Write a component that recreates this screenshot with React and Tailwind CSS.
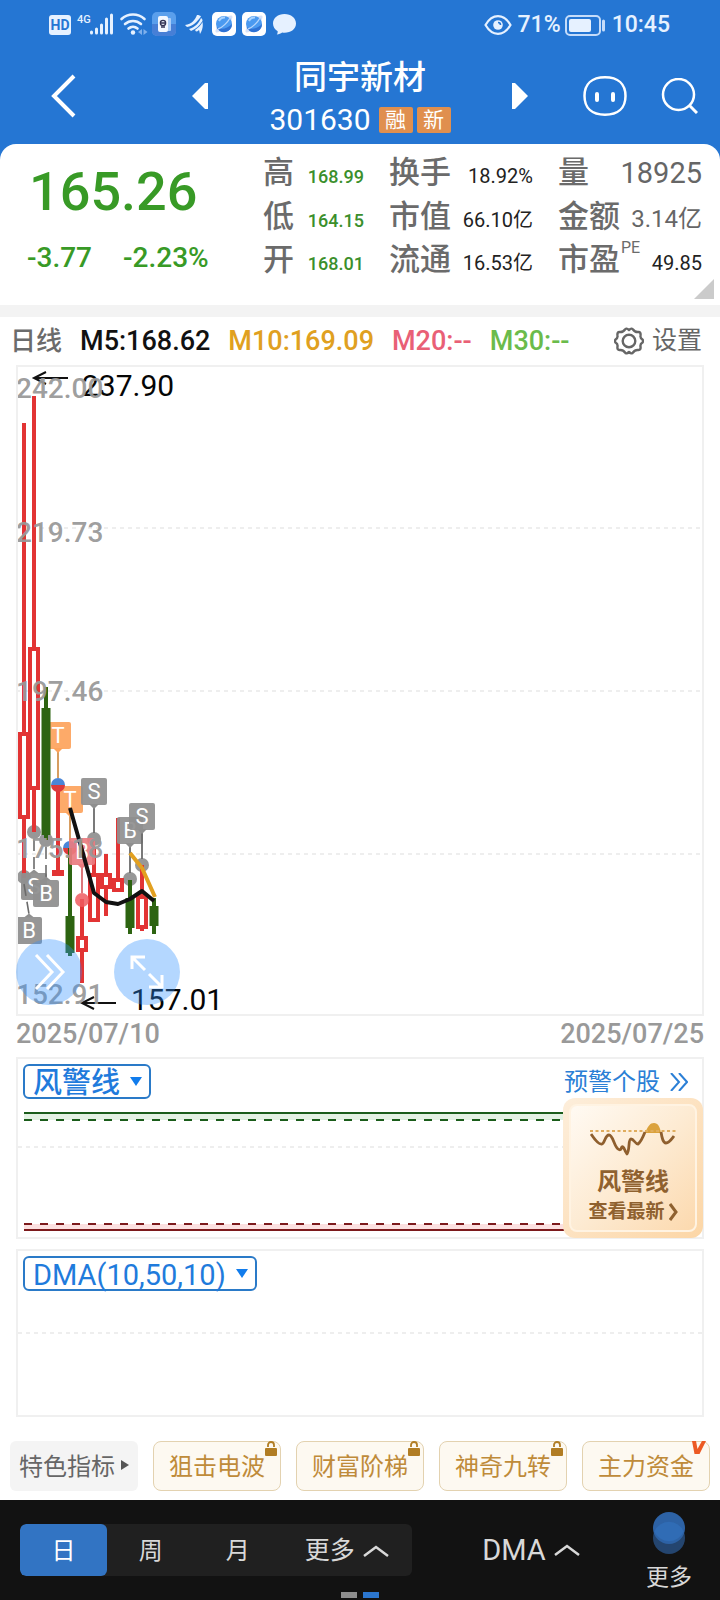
import React from "react";

const RED = "#e23434";
const GREEN = "#2d6411";

// x: centre, high/low: wick ends, top/bottom: body ends
const candles = [
  { x: 8, high: 58, top: 367, bottom: 454, low: 513, up: true },
  { x: 18, high: 31, top: 282, bottom: 425, low: 467, up: true },
  { x: 30, high: 322, top: 343, bottom: 470, low: 475, up: false },
  { x: 42, high: 421, top: 505, bottom: 511, low: 511, up: true },
  { x: 54, high: 483, top: 551, bottom: 588, low: 591, up: false },
  { x: 66, high: 534, top: 571, bottom: 587, low: 618, up: true },
  { x: 78, high: 482, top: 508, bottom: 557, low: 557, up: true },
  { x: 90, high: 489, top: 508, bottom: 524, low: 551, up: true },
  { x: 102, high: 453, top: 513, bottom: 527, low: 527, up: true },
  { x: 114, high: 515, top: 533, bottom: 563, low: 569, up: false },
  { x: 126, high: 500, top: 530, bottom: 564, low: 566, up: true },
  { x: 138, high: 533, top: 541, bottom: 561, low: 569, up: false },
];

const priceLabels = [
  { text: "242.00", y: 33 },
  { text: "219.73", y: 177 },
  { text: "197.46", y: 336 },
  { text: "175.18", y: 493 },
  { text: "152.91", y: 639 },
];

const GRAY_TAG = "#8f8f8f";
const ORANGE_TAG = "#fda35c";
const topTags = [
  { x: 42, y: 357, to: 413, text: "T", fill: ORANGE_TAG, line: "#d39350" },
  { x: 54, y: 421, to: 476, text: "T", fill: ORANGE_TAG, line: "#d39350" },
  { x: 66, y: 473, to: 528, text: "B", fill: "#ea7c80", line: "#d9686c" },
  { x: 78, y: 413, to: 468, text: "S", fill: GRAY_TAG, line: "#6b6b6b" },
  { x: 114, y: 452, to: 508, text: "B", fill: GRAY_TAG, line: "#6b6b6b" },
  { x: 126, y: 438, to: 494, text: "S", fill: GRAY_TAG, line: "#6b6b6b" },
];
const bottomTags = [
  { x: 18, y: 508, from: 474, fromX: 18, text: "S" },
  { x: 30, y: 515, from: 482, fromX: 30, text: "B" },
  { x: 13, y: 552, from: 519, fromX: 8, text: "B" },
];
const grayDots = [
  [8, 512],
  [18, 467],
  [30, 475],
  [78, 474],
  [114, 514],
  [126, 500],
];

function Candle({ x, high, top, bottom, low, up }) {
  if (!up) {
    return (
      <g fill={GREEN}>
        <rect x={x - 2} y={high} width="4" height={low - high} />
        <rect x={x - 4.5} y={top} width="9" height={bottom - top} />
      </g>
    );
  }
  const hollow = bottom - top > 8;
  return (
    <g fill={RED}>
      <rect x={x - 2} y={high} width="4" height={top - high} />
      <rect x={x - 2} y={bottom} width="4" height={low - bottom} />
      {hollow ? (
        <rect x={x - 4} y={top + 2} width="8" height={bottom - top - 4} fill="#fff" stroke={RED} strokeWidth="4" />
      ) : (
        <rect x={x - 6} y={top} width="12" height={bottom - top} />
      )}
    </g>
  );
}

function PriceChart() {
  return (
    <svg className="block h-[651px] w-full overflow-visible font-['Roboto',sans-serif]" role="img" aria-label="日线">
      {[163, 326, 489].map((y) => (
        <line key={y} x1="0" x2="100%" y1={y} y2={y} stroke="#eeeeee" strokeWidth="2" strokeDasharray="4 4" />
      ))}
      {topTags.slice(0, 2).map((t) => (
        <TopTag key={t.x} {...t} />
      ))}
      {grayDots.map(([cx, cy]) => (
        <circle key={cx} cx={cx} cy={cy} r="7" fill="#858585" fillOpacity="0.85" />
      ))}
      {candles.map((c) => (
        <Candle key={c.x} {...c} />
      ))}
      {[[42, 420], [54, 483]].map(([cx, cy]) => (
        <g key={cx}>
          <path d={`M${cx - 7} ${cy}a7 7 0 0 1 14 0z`} fill="#4a86d8" />
          <path d={`M${cx - 7} ${cy}a7 7 0 0 0 14 0z`} fill="#dc3a3c" />
        </g>
      ))}
      <rect x="52" y="483" width="4" height="12" fill={GREEN} />
      <circle cx="66" cy="535" r="7" fill="#ee5c60" fillOpacity="0.85" />
      {topTags.slice(2).map((t) => (
        <TopTag key={t.x} {...t} />
      ))}
      {bottomTags.map((t) => (
        <g key={t.x}>
          <line x1={t.fromX} y1={t.from} x2={t.x} y2={t.y - 3} stroke="#6b6b6b" strokeWidth="1.6" strokeDasharray="12 6" />
          <path d={`M${t.x - 5} ${t.y + 0.5}l5 -4l5 4z`} fill={GRAY_TAG} />
          <rect x={t.x - 13} y={t.y} width="26" height="27" rx="2" fill={GRAY_TAG} fillOpacity="0.94" />
          <text x={t.x} y={t.y + 21} fontSize="22" fill="#fff" textAnchor="middle">{t.text}</text>
        </g>
      ))}
      <polyline points="114,488 126,503 139,532" fill="none" stroke="#e2a020" strokeWidth="4" />
      <polyline points="54,443 66,485 78,528 90,537 102,539 114,534 126,526 138,536" fill="none" stroke="#111" strokeWidth="4" strokeLinejoin="round" />
      <g stroke="#111" strokeWidth="2" fill="none">
        <path d="M52 13H18M30 7L18 13L30 19" />
        <path d="M100 638H66M78 632L66 638L78 644" />
      </g>
      <g fontSize="30" fill="#050505">
        <text x="66" y="31">237.90</text>
        <text x="115" y="645">157.01</text>
      </g>
      <g fontSize="28" fontWeight="500" fill="#999" fillOpacity="0.95">
        {priceLabels.map((p) => (
          <text key={p.text} x="0" y={p.y}>{p.text}</text>
        ))}
      </g>
    </svg>
  );
}

function TopTag({ x, y, to, text, fill, line }) {
  return (
    <g>
      <line x1={x} x2={x} y1={y + 29} y2={to} stroke={line} strokeWidth="1.8" />
      <path d={`M${x - 5} ${y + 26}l5 5l5 -5z`} fill={fill} />
      <rect x={x - 13} y={y} width="26" height="27" rx="2" fill={fill} fillOpacity="0.92" />
      <text x={x} y={y + 21} fontSize="22" fill="#fff" textAnchor="middle">{text}</text>
    </g>
  );
}

function BrowserIcon() {
  return (
    <svg className="size-6" viewBox="0 0 24 24" aria-hidden="true">
      <rect width="24" height="24" rx="5" fill="#fff" />
      <ellipse cx="12" cy="12" rx="11.5" ry="3.6" transform="rotate(-45 12 12)" fill="#d5e2fa" />
      <circle cx="12" cy="12" r="8" fill="#4b9af0" />
      <path d="M4.500 15a8 8 0 0 0 15.500-3C15 17 9 18 4.500 15z" fill="#2f72d4" />
      <path d="M6 17C10 16 16 10 18 6" fill="none" stroke="#b8d6fb" strokeWidth="1.300" />
      <path d="M7 9a6 6 0 0 1 6-3.500" stroke="#a9d4ff" strokeWidth="2" fill="none" />
    </svg>
  );
}

function StatusBar() {
  return (
    <div className="flex h-12 items-center justify-between pr-[50px] pl-[49px] text-[#e6f1ff]">
      <div className="flex items-center">
        <svg className="h-6 w-[100px]" viewBox="0 0 100 24" aria-hidden="true">
          <rect y="3" width="22" height="20" rx="3" fill="#e6f1ff" />
          <text x="11" y="18" fontSize="14" fontWeight="700" fontFamily="Roboto" textAnchor="middle" fill="#2576d3">HD</text>
          <text x="28" y="11" fontSize="11" fontWeight="500" fontFamily="Roboto" fill="#e6f1ff">4G</text>
          <g stroke="#e6f1ff" strokeWidth="3" strokeLinecap="round">
            <path d="M42.500 21v-1M47.500 21v-4M52.500 21v-8M57.500 21V7M62.500 21V3" />
          </g>
          <g fill="none" stroke="#e6f1ff" strokeWidth="2.600" strokeLinecap="round">
            <path d="M72.500 7a17 17 0 0 1 23 0M76 12a12 12 0 0 1 16 0M79.500 16.500a7 7 0 0 1 9 0" />
          </g>
          <circle cx="84" cy="20.500" r="2.200" fill="#e6f1ff" />
          <path d="M93 17v6l-4-3zM94.500 17v6l4-3z" fill="#7fb0ec" />
        </svg>
        <svg className="ml-[3px] size-6" viewBox="0 0 24 24" aria-hidden="true">
          <rect width="24" height="24" rx="5" fill="#5a9fec" />
          <path d="M0 12h24v7a5 5 0 0 1-5 5H5a5 5 0 0 1-5-5z" fill="#477fd6" />
          <rect x="9" y="6" width="10" height="13" rx="1" fill="#a9ccf8" />
          <rect x="6" y="4" width="10" height="16" rx="2" fill="#f2f7ff" />
          <circle cx="11" cy="11" r="2.600" fill="none" stroke="#335" strokeWidth="1.400" />
          <path d="M9 15h4M9 11h4" stroke="#335" strokeWidth="1.300" />
        </svg>
        <svg className="ml-[9px] h-6 w-[18px]" viewBox="0 0 18 24" fill="#e6f1ff" aria-hidden="true">
          <path d="M0 13C7 12 10 8 12 3c2 0 3 .5 4 1.500C12 10 8 14 2 15z" />
          <path d="M4 17c6-2 10-6 12-11 1.500 1 1.500 2 1.500 3C14 14 11 17 6 19z" />
          <path d="M10 18c3-2 6-5 7.500-8 .8 4 0 8-2.500 12-.5-2-.5-3-1-4-1 1-2 1.500-3 1.500z" />
        </svg>
        <div className="ml-[9px] flex gap-[6px]">
          <BrowserIcon />
          <BrowserIcon />
        </div>
        <svg className="ml-[7px] h-6 w-[23px]" viewBox="0 0 23 24" aria-hidden="true">
          <path d="M11.500 2C5 2 0 6 0 11.500c0 3.300 1.800 6 4.700 7.700 0 1.500-.3 2.500-1 3.300 2.400-.2 4-.8 5.500-2 .8.100 1.500.2 2.300.2 6.500 0 11.500-4 11.500-9.300S18 2 11.500 2z" fill="#e6f1ff" />
        </svg>
      </div>
      <div className="flex items-center pt-[2px] text-[23px] leading-6 font-medium">
        <svg className="mr-[6px] h-6 w-7" viewBox="0 0 28 24" fill="none" stroke="#e6f1ff" strokeWidth="2.200" aria-hidden="true">
          <path d="M1.500 12C5 6 9 3.200 14 3.200S23 6 26.500 12C23 18 19 20.800 14 20.800S5 18 1.500 12z" />
          <circle cx="14" cy="12" r="4.800" fill="#e6f1ff" stroke="none" />
          <path d="M14 9.500a2.500 2.500 0 0 1 2.500 2.500" stroke="#2576d3" strokeWidth="1.600" />
        </svg>
        <span>71%</span>
        <svg className="ml-1 h-6 w-[41px]" viewBox="0 0 41 24" aria-hidden="true">
          <rect x="1" y="3" width="34" height="19" rx="4" fill="none" stroke="#c5dcfa" strokeWidth="2" />
          <rect x="4" y="6" width="22" height="13" rx="2" fill="#e6f1ff" />
          <path d="M38.500 8v9" stroke="#c5dcfa" strokeWidth="3" strokeLinecap="round" />
        </svg>
        <span className="ml-[6px]">10:45</span>
      </div>
    </div>
  );
}

function Header() {
  return (
    <header className="flex h-24 items-center justify-between pr-[22px] pl-[50px] text-white">
      <button aria-label="返回" className="shrink-0">
        <svg className="h-11 w-[26px]" viewBox="0 0 26 44" fill="none" stroke="currentColor" strokeWidth="4">
          <path d="M24 2L4 22L24 42" />
        </svg>
      </button>
      <button aria-label="上一只" className="ml-[116px] shrink-0">
        <svg className="h-[26px] w-4" viewBox="0 0 16 26" fill="currentColor">
          <path d="M16 0H13L0 13L13 26H16z" />
        </svg>
      </button>
      <div className="flex flex-1 flex-col items-center pt-1">
        <h1 className="text-[33px] leading-[44px] font-medium">同宇新材</h1>
        <div className="flex items-center gap-1">
          <span className="mr-1 text-[30px] leading-10">301630</span>
          <span className="w-[34px] rounded-xs bg-[#e08f4e] text-center text-[21px] leading-[26px]">融</span>
          <span className="w-[34px] rounded-xs bg-[#e08f4e] text-center text-[21px] leading-[26px]">新</span>
        </div>
      </div>
      <button aria-label="下一只" className="shrink-0">
        <svg className="h-[26px] w-4" viewBox="0 0 16 26" fill="currentColor">
          <path d="M0 0H3L16 13L3 26H0z" />
        </svg>
      </button>
      <button aria-label="助手" className="ml-[55px] shrink-0">
        <svg className="h-10 w-11" viewBox="0 0 44 40" fill="none" stroke="currentColor">
          <path d="M22 1.300C35 1.300 42.500 8 42.500 20S35 38.700 22 38.700 1.500 32 1.500 20 9 1.300 22 1.300z" strokeWidth="2.500" />
          <path d="M14 18v6M30 18v6" strokeWidth="4" strokeLinecap="round" />
        </svg>
      </button>
      <button aria-label="搜索" className="ml-[34px] shrink-0">
        <svg className="h-9 w-[37px]" viewBox="0 0 37 36" fill="none" stroke="currentColor" strokeWidth="2.500">
          <circle cx="17.500" cy="16.500" r="15.500" />
          <path d="M28.500 27.500L36 35" strokeWidth="3" />
        </svg>
      </button>
    </header>
  );
}

function Stat({ label, sup, value, valueClass }) {
  return (
    <div className="flex items-baseline justify-between leading-[43px] whitespace-nowrap">
      <dt className="relative text-[31px] font-medium text-[#6b6b6b]">
        {label}
        {sup && <sup className="absolute top-0 left-full ml-px text-base leading-5 font-normal">{sup}</sup>}
      </dt>
      <dd className={valueClass}>{value}</dd>
    </div>
  );
}

function Quote() {
  const small = "text-lg font-medium text-[#3b8f2c]";
  const dark = "text-xl text-[#222]";
  return (
    <section className="relative flex h-[161px] justify-between rounded-t-2xl bg-white pr-[18px] pl-[27px]">
      <div className="pt-3 text-[#389a26]">
        <div className="pl-[2px] text-[54px] leading-[72px] font-medium">165.26</div>
        <div className="mt-[14px] flex gap-[31px] text-[28px] leading-8 font-medium">
          <span>-3.77</span>
          <span>-2.23%</span>
        </div>
      </div>
      <dl className="grid grid-cols-[101px_144px_144px] content-start gap-x-[25px] pt-[7px]">
        <Stat label="高" value="168.99" valueClass={small} />
        <Stat label="换手" value="18.92%" valueClass={dark} />
        <Stat label="量" value="18925" valueClass="text-[29px] text-[#666]" />
        <Stat label="低" value="164.15" valueClass={small} />
        <Stat label="市值" value="66.10亿" valueClass={dark} />
        <Stat label="金额" value="3.14亿" valueClass="text-2xl text-[#666]" />
        <Stat label="开" value="168.01" valueClass={small} />
        <Stat label="流通" value="16.53亿" valueClass={dark} />
        <Stat label="市盈" sup="PE" value="49.85" valueClass={dark} />
      </dl>
      <svg className="absolute right-[6px] bottom-[6px] size-5" viewBox="0 0 20 20" aria-hidden="true">
        <path d="M20 0V20H0z" fill="#cbcbcb" />
      </svg>
    </section>
  );
}

function Averages() {
  return (
    <div className="box-content flex h-12 items-center border-t-12 border-[#f3f3f3] bg-white pr-[18px] pl-[10px] text-[27px] leading-8 font-medium whitespace-nowrap">
      <span className="text-[26px] text-[#6b6b6b]">日线</span>
      <span className="ml-[18px] text-[#111]">M5:168.62</span>
      <span className="ml-[18px] text-[#e0a020]">M10:169.09</span>
      <span className="ml-[18px] text-[#e96076]">M20:--</span>
      <span className="ml-[18px] text-[#6bbb4b]">M30:--</span>
      <button className="ml-auto flex items-center gap-2 text-[25px] font-normal text-[#666]">
        <svg className="size-[30px]" viewBox="0 0 30 30" fill="none" stroke="currentColor" strokeWidth="2.400" strokeLinejoin="round" aria-hidden="true">
          <path d="M11 3.500Q12 1.500 15 4Q18 1.500 19 3.500Q21 6.500 24.500 6Q27 6 26.500 9.500Q26 12 28.500 13.500Q29.500 15 28.500 16.500Q26 18 26.500 20.500Q27 24 24.500 24Q21 23.500 19 26.500Q18 28.500 15 26Q12 28.500 11 26.500Q9 23.500 5.500 24Q3 24 3.500 20.500Q4 18 1.500 16.500Q.5 15 1.500 13.500Q4 12 3.500 9.500Q3 6 5.500 6Q9 6.500 11 3.500z" />
          <circle cx="15" cy="15" r="6.300" />
        </svg>
        设置
      </button>
    </div>
  );
}

function IndicatorButton({ children }) {
  return (
    <button className="absolute top-[5px] left-[5px] flex h-[35px] items-center gap-[10px] rounded-md border-2 border-[#2a7ac8] bg-white pt-[2px] pr-[7px] pl-[8px] text-[29px] leading-8 text-[#1f7bdc]">
      {children}
      <svg className="mb-[2px] h-[9px] w-[12px]" viewBox="0 0 12 9" aria-hidden="true">
        <path d="M0 0H12L6 9z" fill="#117cec" />
      </svg>
    </button>
  );
}

function WindPanel() {
  return (
    <section className="relative mt-[41px] h-[182px] border-2 border-[#f0f0f0]">
      <IndicatorButton>
        <span className="font-medium">风警线</span>
      </IndicatorButton>
      <a href="#alerts" className="absolute top-[7px] right-[14px] flex items-center gap-[10px] text-2xl leading-8 text-[#2b7fd6]">
        预警个股
        <svg className="h-[18px] w-[18px]" viewBox="0 0 18 18" fill="none" stroke="currentColor" strokeWidth="2" aria-hidden="true">
          <path d="M1 0L9 9L1 18M9 0L17 9L9 18" />
        </svg>
      </a>
      <svg className="block h-full w-full" aria-hidden="true">
        <line x1="0" x2="100%" y1="88" y2="88" stroke="#eeeeee" strokeWidth="2" strokeDasharray="4 4" />
        <rect x="6" y="54" width="97%" height="7" fill="#e3f1e3" />
        <line x1="6" x2="98%" y1="54" y2="54" stroke="#1a5c1a" strokeWidth="2" />
        <line x1="6" x2="98%" y1="61" y2="61" stroke="#1a5c1a" strokeWidth="2" strokeDasharray="8 8" />
        <rect x="6" y="165" width="97%" height="6" fill="#fbe0e0" />
        <line x1="6" x2="98%" y1="165" y2="165" stroke="#7c1a1c" strokeWidth="2" strokeDasharray="8 8" />
        <line x1="6" x2="98%" y1="171" y2="171" stroke="#7c1a1c" strokeWidth="2" />
      </svg>
      <button className="absolute -right-px -bottom-px h-[140px] w-[140px] rounded-xl bg-linear-to-br from-[#fdeedb] to-[#fcd6a6] p-[6px] font-bold text-[#8f612f]">
        <span className="flex h-full flex-col items-center rounded-lg border-2 border-[#fff3e2] bg-linear-to-br from-[#fffaf3] via-[#fdebd3] to-[#fcd9ae] pt-[16px]">
          <svg className="h-[34px] w-[86px]" viewBox="0 0 86 34" fill="none" aria-hidden="true">
            <path d="M55 11C58 4 60 1 64 1S70 5 71 11z" fill="#dba23c" />
            <path d="M0 9H86" stroke="#e0ad5e" strokeWidth="2" strokeDasharray="3 2.500" />
            <path d="M1 12C5 18 9 23 12 22S15 13 19 13 24 24 28 27 31 23 33 25 34 28 37 32C40 28 38 17 41 17S45 22 48 22C51 20 53 15 55 10M71 10C72 16 73 21 76 21S81 18 84 14" stroke="#8f5f2e" strokeWidth="2.800" strokeLinejoin="round" />
          </svg>
          <span className="mt-[10px] text-2xl leading-8">风警线</span>
          <span className="flex items-center gap-1 text-[19px] leading-7">
            查看最新
            <svg className="h-[18px] w-[9px]" viewBox="0 0 9 18" fill="none" stroke="currentColor" strokeWidth="3">
              <path d="M1 1L7 9L1 17" />
            </svg>
          </span>
        </span>
      </button>
    </section>
  );
}

function Chips() {
  return (
    <div className="grid grid-cols-5 gap-[15px] px-[10px] pt-6 pb-[9px] text-2xl whitespace-nowrap">
      <button className="flex h-[50px] items-center justify-center gap-[6px] rounded-md bg-[#f4f4f4] pt-[2px] text-[#666]">
        特色指标
        <svg className="mb-1 h-[10px] w-2" viewBox="0 0 8 10" aria-hidden="true">
          <path d="M0 0L8 5L0 10z" fill="#555" />
        </svg>
      </button>
      {["狙击电波", "财富阶梯", "神奇九转"].map((name) => (
        <button key={name} className="relative h-[50px] rounded-lg border border-[#e3d2b0] bg-[#fdf9f1] pt-[2px] text-[#bf8b3a]">
          {name}
          <svg className="absolute -top-px right-[3px] h-[15px] w-3" viewBox="0 0 12 15" aria-hidden="true">
            <rect y="7" width="12" height="8" rx="1" fill="#b17d24" />
            <path d="M3 6V4a3 3 0 0 1 6 0V6" fill="none" stroke="#b17d24" strokeWidth="1.800" />
          </svg>
        </button>
      ))}
      <button className="relative h-[50px] rounded-lg border border-[#e3d2b0] bg-[#fdf9f1] pt-[2px] text-[#bf8b3a]">
        主力资金
        <svg className="absolute -top-px right-[3px] h-[13px] w-[14px]" viewBox="0 0 14 13" aria-hidden="true">
          <path d="M0 0H4L5.500 8L10 0H14L7.500 13H2.500z" fill="#ec5a24" />
        </svg>
      </button>
    </div>
  );
}

function Caret() {
  return (
    <svg className="h-3 w-[26px]" viewBox="0 0 26 12" fill="none" stroke="currentColor" strokeWidth="2.500" aria-hidden="true">
      <path d="M1 11L13 2L25 11" />
    </svg>
  );
}

function BottomBar() {
  return (
    <footer className="relative flex h-[100px] bg-[#121212] pl-5 text-2xl text-[#d8d8d8]">
      <nav className="mt-6 grid h-[52px] w-[56%] grid-cols-[2fr_2fr_2fr_3fr] overflow-hidden rounded-md bg-[#202020]">
        <button className="rounded-md bg-[#3274c3] pt-[2px] text-white">日</button>
        <button className="pt-[2px]">周</button>
        <button className="pt-[2px]">月</button>
        <button className="flex items-center justify-center gap-2 pt-[2px] text-[25px]">
          更多
          <Caret />
        </button>
      </nav>
      <button className="mt-6 flex h-[52px] flex-1 items-center justify-center gap-2 pl-8 text-[29px]">
        DMA
        <Caret />
      </button>
      <button className="flex w-[102px] flex-col items-center pt-3 text-[23px] leading-8">
        <svg className="mb-2 h-[42px] w-8" viewBox="0 0 32 42" aria-hidden="true">
          <circle cx="16" cy="26" r="16" fill="#24456f" />
          <circle cx="16" cy="16" r="16" fill="#2d62a5" />
          <path d="M1.300 19.500a16 16 0 0 1 29.400 0a16 16 0 0 1-29.400 0z" fill="#306cb5" />
        </svg>
        更多
      </button>
      <div className="absolute inset-x-0 bottom-[2px] flex justify-center gap-[6px]">
        <span className="h-[6px] w-4 bg-[#8e8e8e]" />
        <span className="h-[6px] w-4 bg-[#2b76cf]" />
      </div>
    </footer>
  );
}

export default function App() {
  return (
    <div className="bg-white font-['Roboto','Noto_Sans_CJK_SC',sans-serif]">
      <div className="bg-[#2576d3]">
        <StatusBar />
        <Header />
        <Quote />
      </div>
      <Averages />
      <main className="px-4">
        <section>
          <div className="relative outline-2 -outline-offset-2 outline-[#f0f0f0]">
            <PriceChart />
            <button aria-label="展开" className="absolute bottom-[11px] left-0 flex size-[66px] items-center justify-center rounded-full bg-[#3090ff]/36">
              <svg className="size-9" viewBox="0 0 36 36" fill="none" stroke="#fff" strokeWidth="3">
                <path d="M5 1L21 18L5 35M16 1L32 18L16 35" />
              </svg>
            </button>
            <button aria-label="全屏" className="absolute bottom-[11px] left-[98px] flex size-[66px] items-center justify-center rounded-full bg-[#3090ff]/36">
              <svg className="size-9" viewBox="0 0 36 36" fill="none" stroke="#fff" strokeWidth="3">
                <path d="M3 15V3H16M3 3L16 16M33 21V33H20M33 33L20 20" />
              </svg>
            </button>
          </div>
          <div className="flex justify-between pt-[2px] text-[27px] leading-8 font-medium text-[#999]">
            <span>2025/07/10</span>
            <span>2025/07/25</span>
          </div>
        </section>
        <div className="-mt-[34px]">
          <WindPanel />
        </div>
        <section className="relative mt-[10px] h-[168px] border-2 border-[#f0f0f0]">
          <IndicatorButton>DMA(10,50,10)</IndicatorButton>
          <svg className="block h-full w-full" aria-hidden="true">
            <line x1="0" x2="100%" y1="82" y2="82" stroke="#eeeeee" strokeWidth="2" strokeDasharray="4 4" />
          </svg>
        </section>
      </main>
      <Chips />
      <BottomBar />
    </div>
  );
}
